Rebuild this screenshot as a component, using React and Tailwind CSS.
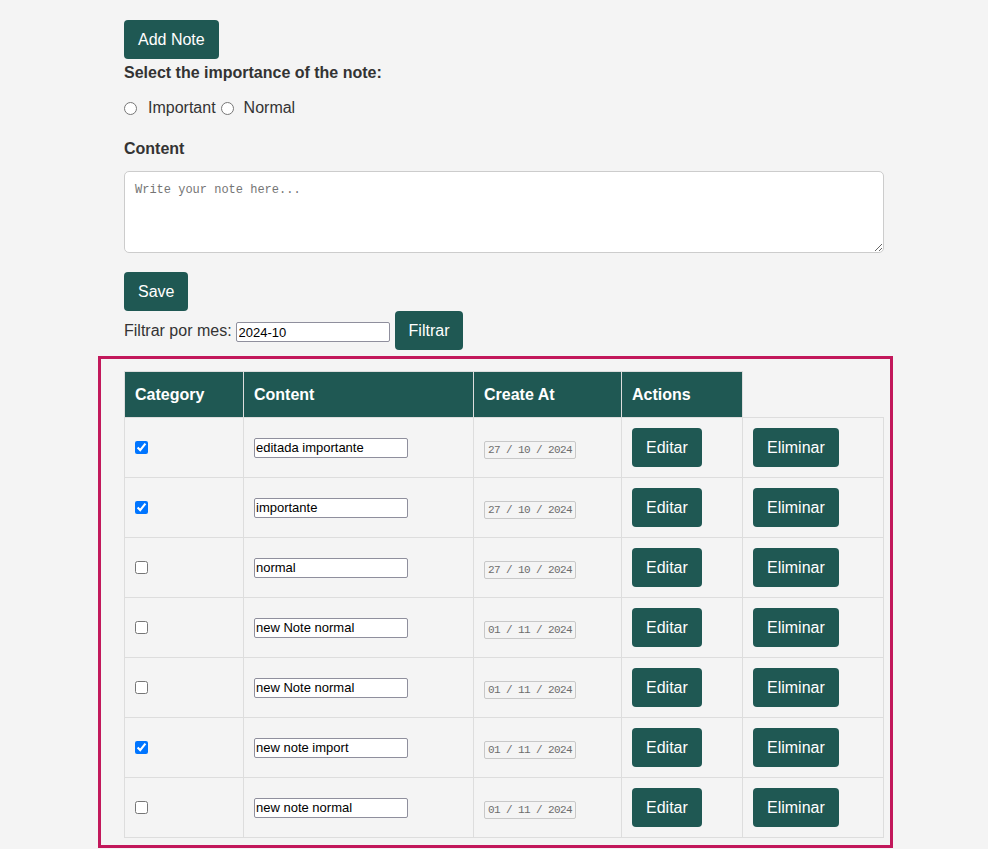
import { useState } from 'react';

const notes = [
  { id: 1, important: true, content: 'editada importante', date: '27 / 10 / 2024' },
  { id: 2, important: true, content: 'importante', date: '27 / 10 / 2024' },
  { id: 3, important: false, content: 'normal', date: '27 / 10 / 2024' },
  { id: 4, important: false, content: 'new Note normal', date: '01 / 11 / 2024' },
  { id: 5, important: false, content: 'new Note normal', date: '01 / 11 / 2024' },
  { id: 6, important: true, content: 'new note import', date: '01 / 11 / 2024' },
  { id: 7, important: false, content: 'new note normal', date: '01 / 11 / 2024' },
];

const btn =
  'bg-[#1f5853] text-white text-[16px] leading-[19px] px-[14px] py-[10px] rounded-[4px] cursor-pointer';

const App = () => {
  const [month, setMonth] = useState('2024-10');
  const [text, setText] = useState('');

  return (
    <div className="min-h-screen bg-[#f4f4f4] font-['Liberation_Sans',Arial,sans-serif] text-[#333]">
      <div className="ml-[98px] w-[795px] pt-[20px]">
        <div className="pl-[26px] w-[786px]">
          <button className={btn}>Add Note</button>
          <p className="mt-[5px] text-[16px] leading-[18px] font-bold">Select the importance of the note:</p>
          <div className="mt-[17px] flex items-center h-[18px] text-[16px]">
            <input type="radio" name="imp" className="m-0 w-[13px] h-[13px]" />
            <span className="ml-[11px] mr-[5px]">Important</span>
            <input type="radio" name="imp" className="m-0 w-[13px] h-[13px]" />
            <span className="ml-[10px]">Normal</span>
          </div>
          <p className="mt-[23px] text-[16px] leading-[18px] font-bold">Content</p>
          <textarea
            value={text}
            onChange={(e) => setText(e.target.value)}
            placeholder="Write your note here..."
            className="mt-[13px] block w-[760px] h-[82px] bg-white border border-[#ccc] rounded-[5px] p-[10px] font-['Liberation_Mono',monospace] text-[12px] leading-[16px] placeholder:text-[#757575]"
          />
          <button className={`${btn} mt-[19px] block`}>Save</button>
          <div className="flex items-start text-[16px]">
            <span className="mt-[11px] leading-[18px]">Filtrar por mes:</span>
            <input
              value={month}
              onChange={(e) => setMonth(e.target.value)}
              className="mt-[11px] ml-[4px] w-[154px] h-[20px] bg-white border border-[#8f8f9d] rounded-[2px] px-[2px] text-[13px] text-black font-['Liberation_Sans',Arial,sans-serif]"
            />
            <button className={`${btn} ml-[5px]`}>Filtrar</button>
          </div>
        </div>

        <div className="mt-[6px] border-[3px] border-[#c2185b] pt-[12px] pb-[7px] pl-[23px] pr-[6px]">
          <table className="border-collapse w-[760px] table-fixed">
            <colgroup>
              <col className="w-[119px]" />
              <col className="w-[230px]" />
              <col className="w-[148px]" />
              <col className="w-[121px]" />
              <col className="w-[141px]" />
            </colgroup>
            <thead>
              <tr>
                {['Category', 'Content', 'Create At', 'Actions'].map((h) => (
                  <th
                    key={h}
                    className="bg-[#1f5853] text-white text-left font-bold text-[16px] leading-[18px] px-[10px] pt-[14px] pb-[13px] border border-[#ddd]"
                  >
                    {h}
                  </th>
                ))}
              </tr>
            </thead>
            <tbody>
              {notes.map((n) => (
                <tr key={n.id}>
                  <td className="border border-[#ddd] p-[10px] align-middle">
                    <input type="checkbox" defaultChecked={n.important} className="m-0 block w-[13px] h-[13px]" />
                  </td>
                  <td className="border border-[#ddd] p-[10px] align-middle">
                    <input
                      defaultValue={n.content}
                      className="block w-[154px] h-[20px] bg-white border border-[#8f8f9d] rounded-[2px] px-[1px] text-[13px] text-black font-['Liberation_Sans',Arial,sans-serif]"
                    />
                  </td>
                  <td className="border border-[#ddd] p-[10px] align-middle">
                    <span className="inline-flex items-center justify-center w-[92px] h-[18px] border border-[#c8c8c8] rounded-[2px] font-['Liberation_Mono',monospace] text-[11px] tracking-[-0.6px] text-[#6d6d6d] whitespace-pre">
                      {n.date}
                    </span>
                  </td>
                  <td className="border border-[#ddd] p-[10px] align-middle">
                    <button className={`${btn} block`}>Editar</button>
                  </td>
                  <td className="border border-[#ddd] p-[10px] align-middle">
                    <button className={`${btn} block`}>Eliminar</button>
                  </td>
                </tr>
              ))}
            </tbody>
          </table>
        </div>
      </div>
    </div>
  );
};

export default App;
